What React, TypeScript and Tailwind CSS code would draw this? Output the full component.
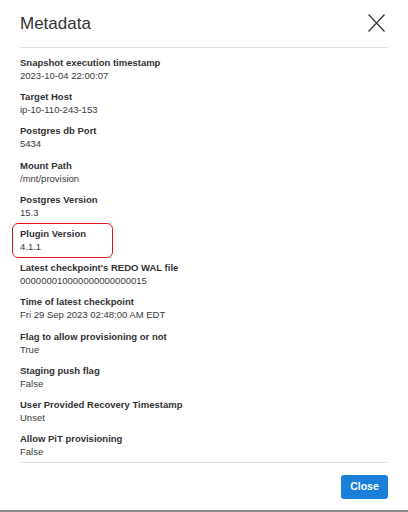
import React from 'react';

const items = [
  { label: "Snapshot execution timestamp", value: "2023-10-04 22:00:07" },
  { label: "Target Host", value: "ip-10-110-243-153" },
  { label: "Postgres db Port", value: "5434" },
  { label: "Mount Path", value: "/mnt/provision" },
  { label: "Postgres Version", value: "15.3" },
  { label: "Plugin Version", value: "4.1.1", highlight: true },
  { label: "Latest checkpoint's REDO WAL file", value: "000000010000000000000015" },
  { label: "Time of latest checkpoint", value: "Fri 29 Sep 2023 02:48:00 AM EDT" },
  { label: "Flag to allow provisioning or not", value: "True" },
  { label: "Staging push flag", value: "False" },
  { label: "User Provided Recovery Timestamp", value: "Unset" },
  { label: "Allow PiT provisioning", value: "False" },
];

const App = () => {
  return (
    <div className="w-[408px] h-[512px] bg-white flex flex-col font-['Liberation_Sans',Arial,sans-serif] text-[#333]">
      {/* Header */}
      <div className="mx-5 h-[48px] flex items-center justify-between border-b border-[#e2e2e2]">
        <h2 className="text-[17px] leading-none text-[#333] pb-[1px]">Metadata</h2>
        <button className="w-[17px] h-[18px] flex items-center justify-center mr-[3px] mb-[1px]">
          <svg width="17" height="18" viewBox="0 0 17 18" fill="none">
            <path d="M0.5 0.5L16.5 17.5M16.5 0.5L0.5 17.5" stroke="#333" strokeWidth="1.2" />
          </svg>
        </button>
      </div>

      {/* Body */}
      <div className="mx-5 pt-[8px] pb-[4px] flex flex-col gap-[8px] border-b border-[#e2e2e2]">
        {items.map((item) => (
          <div key={item.label} className="relative text-[9.5px] leading-[13.1px]">
            {item.highlight && (
              <div className="absolute -left-[8px] -top-[4px] w-[101px] h-[35px] border-[1.5px] border-[#e8141b] rounded-[6px]" />
            )}
            <div className="font-bold text-[#333]">{item.label}</div>
            <div className="text-[#3a3a3a]">{item.value}</div>
          </div>
        ))}
      </div>

      {/* Footer */}
      <div className="mx-5 flex justify-end pt-[12px]">
        <button className="w-[47px] h-[24px] rounded-[3px] bg-[#1a7fd9] text-white text-[10.5px] font-bold">
          Close
        </button>
      </div>
      <div className="flex-1" />
      <div className="h-[2px] bg-[#8a8a8a]" />
    </div>
  );
};

export default App;
